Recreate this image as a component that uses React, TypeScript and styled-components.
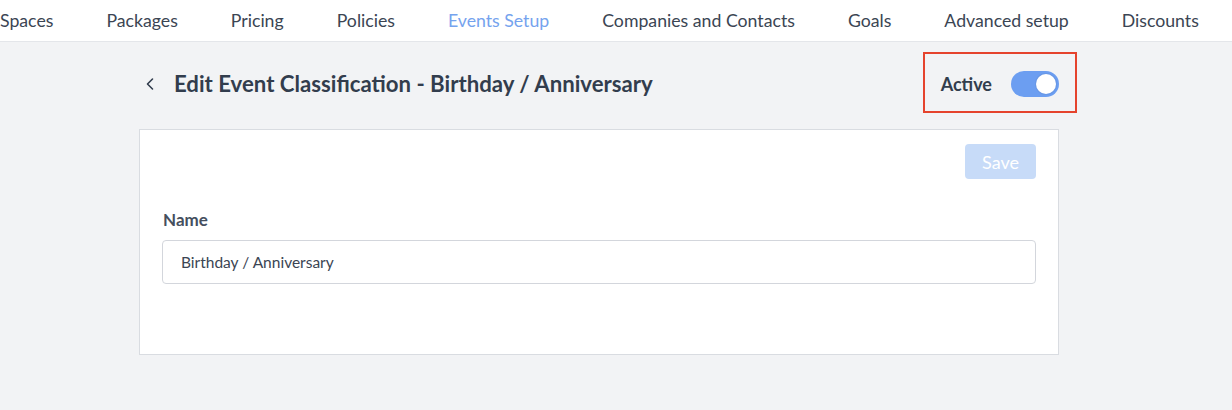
import styled, { createGlobalStyle } from "styled-components";

const GlobalStyle = createGlobalStyle`
  html, body {
    margin: 0;
    padding: 0;
    background: #f2f3f5;
    font-family: Lato, "Open Sans", sans-serif;
  }
`;

const Page = styled.div`
  width: 1232px;
  height: 410px;
  overflow: hidden;
  background: #f2f3f5;
`;

const TopNav = styled.nav`
  display: flex;
  align-items: center;
  gap: 53px;
  height: 41px;
  background: #fff;
  border-bottom: 1px solid #e4e6ea;
  white-space: nowrap;
`;

interface NavItemProps {
  $active?: boolean;
}
const NavItem = styled.span<NavItemProps>`
  font-size: 17.7px;
  color: ${(p) => (p.$active ? "#75a3ee" : "#3b4553")};
`;

const Content = styled.div`
  width: 920px;
  margin-left: 139px;
  padding-top: 29px;
`;

const HeaderRow = styled.div`
  display: flex;
  align-items: center;
  justify-content: space-between;
  height: 26px;
  margin-bottom: 32px;
`;

const TitleGroup = styled.div`
  display: flex;
  align-items: center;
  gap: 19px;
  padding-left: 6px;
`;

const BackButton = styled.button`
  display: flex;
  align-items: center;
  border: none;
  background: none;
  padding: 0;
  cursor: pointer;
`;

const Title = styled.h1`
  margin: 0;
  font-size: 22.2px;
  font-weight: 700;
  color: #323d4d;
  position: relative;
  top: -1px;
`;

const ActiveGroup = styled.div`
  position: relative;
  display: flex;
  align-items: center;
  gap: 19px;
`;

const Highlight = styled.div`
  position: absolute;
  left: -18px;
  right: -18px;
  top: -19px;
  bottom: -16px;
  border: 2px solid #e5432d;
  pointer-events: none;
`;

const ActiveLabel = styled.span`
  font-size: 18px;
  font-weight: 700;
  color: #323d4d;
`;

interface ToggleProps {
  $on: boolean;
}
const Toggle = styled.div<ToggleProps>`
  position: relative;
  width: 48px;
  height: 26px;
  border-radius: 13px;
  background: ${(p) => (p.$on ? "#6c9ef1" : "#cdd2da")};
`;

const Knob = styled.div<ToggleProps>`
  position: absolute;
  top: 3px;
  left: ${(p) => (p.$on ? "25px" : "3px")};
  width: 20px;
  height: 20px;
  border-radius: 50%;
  background: #fff;
  box-shadow: 0 0 0 1px rgba(90, 130, 200, 0.25);
`;

const Card = styled.div`
  background: #fff;
  border: 1px solid #d9dce1;
  padding: 14px 22px 70px 22px;
`;

const CardActions = styled.div`
  display: flex;
  justify-content: flex-end;
`;

const SaveButton = styled.button`
  width: 71px;
  height: 35px;
  border: none;
  border-radius: 4px;
  background: #c7dbf8;
  color: #fff;
  font-family: Lato, sans-serif;
  font-size: 18px;
  cursor: not-allowed;
`;

const Field = styled.div`
  margin-top: 30px;
  display: flex;
  flex-direction: column;
  gap: 10px;
`;

const Label = styled.label`
  font-size: 17px;
  font-weight: 700;
  color: #454f5e;
  padding-left: 1px;
`;

const Input = styled.input`
  height: 44px;
  box-sizing: border-box;
  border: 1px solid #d3d6dc;
  border-radius: 4px;
  padding: 0 18px;
  font-family: Lato, sans-serif;
  font-size: 15.5px;
  color: #3b4553;
  outline: none;
`;

const navItems = [
  "Spaces",
  "Packages",
  "Pricing",
  "Policies",
  "Events Setup",
  "Companies and Contacts",
  "Goals",
  "Advanced setup",
  "Discounts",
];

const App = () => {
  return (
    <Page>
      <GlobalStyle />
      <TopNav>
        {navItems.map((item) => (
          <NavItem key={item} $active={item === "Events Setup"}>
            {item}
          </NavItem>
        ))}
      </TopNav>
      <Content>
        <HeaderRow>
          <TitleGroup>
            <BackButton aria-label="Back">
              <svg width="10" height="14" viewBox="0 0 10 14">
                <polyline
                  points="7.5,2 2.5,7 7.5,12"
                  fill="none"
                  stroke="#323d4d"
                  strokeWidth="1.6"
                  strokeLinecap="round"
                  strokeLinejoin="round"
                />
              </svg>
            </BackButton>
            <Title>Edit Event Classification - Birthday / Anniversary</Title>
          </TitleGroup>
          <ActiveGroup>
            <Highlight />
            <ActiveLabel>Active</ActiveLabel>
            <Toggle $on={true}>
              <Knob $on={true} />
            </Toggle>
          </ActiveGroup>
        </HeaderRow>
        <Card>
          <CardActions>
            <SaveButton disabled>Save</SaveButton>
          </CardActions>
          <Field>
            <Label>Name</Label>
            <Input defaultValue="Birthday / Anniversary" />
          </Field>
        </Card>
      </Content>
    </Page>
  );
};

export default App;
